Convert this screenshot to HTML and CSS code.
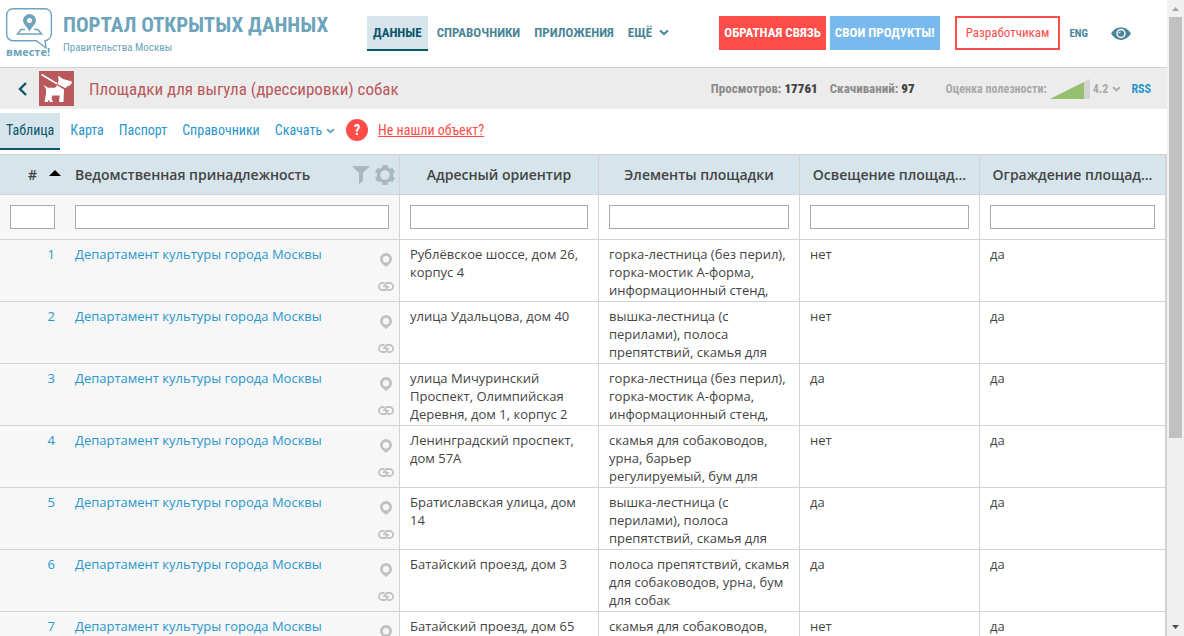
FILE: index.html
```html
<!DOCTYPE html>
<html lang="ru">
<head>
<meta charset="utf-8">
<title>Портал открытых данных</title>
<link rel="stylesheet" href="styles.css">
</head>
<body>
<svg class="defs" aria-hidden="true">
  <symbol id="chevron" viewBox="0 0 10 7"><path d="M1 1.500 5 5 9 1.500" fill="none" stroke="currentColor" stroke-width="2.200"/></symbol>
  <symbol id="pin" viewBox="0 0 12 14"><path fill="currentColor" fill-rule="evenodd" d="M6 0a6 6 0 0 1 6 6c0 2-.9 3.400-2.200 4.700L6 14l-3.800-3.300C.9 9.400 0 8 0 6a6 6 0 0 1 6-6zm0 3a3.200 3.200 0 1 0 0 6.400A3.200 3.200 0 0 0 6 3z"/></symbol>
  <symbol id="chain" viewBox="0 0 16 9"><g fill="none" stroke="currentColor" stroke-width="1.800"><path d="M6.500 1H4.400a3.500 3.500 0 0 0 0 7h2.200c1.500 0 2.200-.8 2.200-2s-.8-1.800-2-1.800H5"/><path d="M9.500 8h2.100a3.500 3.500 0 0 0 0-7H9.400C7.900 1 7.200 1.800 7.200 3s.8 1.800 2 1.800H11"/></g></symbol>
</svg>
<div class="page">
  <header class="header">
    <a class="brand" href="#">
      <svg class="logo" viewBox="0 0 48 42" aria-hidden="true">
        <path d="M7 .7h32c4 0 6.400 3 6.400 7v17c0 4-2.400 7.500-6.400 8l1 7.300-9.500-7.300H7c-4 0-6.300-3-6.300-7v-18c0-4 2.300-7 6.300-7z" fill="none" stroke="currentColor" stroke-width="1.400"/>
        <path fill="currentColor" fill-rule="evenodd" d="M23.500 6a6.500 6.500 0 0 1 6.500 6.500c0 4-4.500 6.500-6.500 11-2-4.500-6.500-7-6.500-11A6.500 6.500 0 0 1 23.500 6zm0 4a2.500 2.500 0 1 0 0 5 2.500 2.500 0 0 0 0-5z"/>
        <path d="M19 21.500h-4L11.500 26h24L32 21.500h-4" fill="none" stroke="currentColor" stroke-width="1.500"/>
      </svg>
      <span class="logo-word">вместе!</span>
    </a>
    <div class="titles">
      <div class="site-title">ПОРТАЛ ОТКРЫТЫХ ДАННЫХ</div>
      <div class="site-sub">Правительства Москвы</div>
    </div>
    <nav class="nav">
      <a class="nav-link active" href="#">ДАННЫЕ</a>
      <a class="nav-link" href="#">СПРАВОЧНИКИ</a>
      <a class="nav-link" href="#">ПРИЛОЖЕНИЯ</a>
      <button class="nav-link more" type="button">ЕЩЁ <svg class="chev"><use href="#chevron"/></svg></button>
    </nav>
    <div class="actions">
      <button class="btn red" type="button">ОБРАТНАЯ СВЯЗЬ</button>
      <button class="btn blue" type="button">СВОИ ПРОДУКТЫ!</button>
      <a class="btn outline" href="#">Разработчикам</a>
      <a class="lang" href="#">ENG</a>
      <button class="eye" type="button" aria-label="Версия для слабовидящих">
        <svg viewBox="0 0 20 13"><path fill="currentColor" fill-rule="evenodd" d="M0 6.500C5-2 15-2 20 6.500 15 15 5 15 0 6.500zM10 1.800a4.700 4.700 0 1 0 0 9.400 4.700 4.700 0 0 0 0-9.400z"/><path fill="currentColor" fill-rule="evenodd" d="M10 3.300a3.200 3.200 0 1 1 0 6.400 3.200 3.200 0 0 1 0-6.400zm-.3 1.100c-1.100 0-1.900.8-1.900 1.900h1c0-.6.300-.9.900-.9z"/></svg>
      </button>
    </div>
  </header>

  <section class="dataset">
    <a class="back" href="#" aria-label="Назад"><svg viewBox="0 0 10 14"><path d="M8 1 2 7l6 6" fill="none" stroke="currentColor" stroke-width="2.400"/></svg></a>
    <svg class="dog" viewBox="0 0 35 35" aria-hidden="true">
      <rect width="35" height="35" fill="#b9595c"/>
      <g fill="#fff"><path d="M19 4.500 24 8l9 2.500c0 2.500-2 4.500-5 5l-1.500 1.700L18.500 13l1.200-3.500z"/><path d="M4.500 14 9 16.800h7l2.300-2.600L25 18.500 24.500 31H20l.7-6.500h-7.200L12.500 27l1.500 4h-3.200L9.500 28.500 8.800 31H5.500l1.500-8v-5z"/></g>
      <path d="M2.500 3.500 18 12.700" stroke="#fff" stroke-width="1.600"/>
    </svg>
    <h1 class="dataset-title">Площадки для выгула (дрессировки) собак</h1>
    <div class="stats">
      <span>Просмотров: <b>17761</b></span>
      <span>Скачиваний: <b>97</b></span>
    </div>
    <div class="rating">
      <span>Оценка полезности:</span>
      <svg class="wedge" viewBox="0 0 40 20" aria-hidden="true"><path d="M0 20 40 0v20z" fill="#d3d3d3"/><path d="M0 20 34 3v17z" fill="#95c06f"/></svg>
      <button class="score" type="button">4.2 <svg class="chev small"><use href="#chevron"/></svg></button>
    </div>
    <a class="rss" href="#">RSS</a>
  </section>

  <nav class="tabs">
    <a class="tab active" href="#">Таблица</a>
    <a class="tab" href="#">Карта</a>
    <a class="tab" href="#">Паспорт</a>
    <a class="tab" href="#">Справочники</a>
    <button class="tab" type="button">Скачать <svg class="chev small"><use href="#chevron"/></svg></button>
    <span class="help">?</span>
    <a class="missing" href="#">Не нашли объект?</a>
  </nav>

  <table class="grid">
    <colgroup><col class="c-num"><col class="c-dept"><col class="c-addr"><col class="c-items"><col class="c-light"><col class="c-fence"></colgroup>
    <thead>
      <tr class="heads">
        <th class="num">#<svg class="sort" viewBox="0 0 12 6"><path d="M0 6 6 0l6 6z"/></svg></th>
        <th class="dept"><div class="dept-head"><span>Ведомственная принадлежность</span>
          <button type="button" aria-label="Фильтр"><svg width="18" height="18" viewBox="0 0 18 18"><path fill="currentColor" d="M0 0h18l-7 7v8l-4 3V7z"/></svg></button>
          <button type="button" aria-label="Настройки"><svg width="20" height="20" viewBox="0 0 20 20"><g fill="none" stroke="currentColor"><circle cx="10" cy="10" r="6.500" stroke-width="3.400"/><path stroke-width="5" d="M10 0v4M18.700 5l-3.500 2M18.700 15l-3.500-2M10 20v-4M1.300 15l3.500-2M1.300 5l3.500 2"/></g></svg></button></div></th>
        <th>Адресный ориентир</th>
        <th>Элементы площадки</th>
        <th>Освещение площад...</th>
        <th>Ограждение площад...</th>
      </tr>
      <tr class="filters">
        <td class="num"><input type="text" aria-label="Номер"></td>
        <td class="dept"><input type="text" aria-label="Ведомственная принадлежность"></td>
        <td><input type="text" aria-label="Адресный ориентир"></td>
        <td><input type="text" aria-label="Элементы площадки"></td>
        <td><input type="text" aria-label="Освещение площадки"></td>
        <td><input type="text" aria-label="Ограждение площадки"></td>
      </tr>
    </thead>
    <tbody>
      <tr><td class="num"><a href="#">1</a></td><td class="dept"><div class="dept-cell"><a href="#">Департамент культуры города Москвы</a><span class="marks"><svg class="pin"><use href="#pin"/></svg><svg class="chain"><use href="#chain"/></svg></span></div></td><td><div class="clip">Рублёвское шоссе, дом 26, корпус 4</div></td><td><div class="clip">горка-лестница (без перил), горка-мостик А-форма, информационный стенд,</div></td><td>нет</td><td>да</td></tr>
      <tr><td class="num"><a href="#">2</a></td><td class="dept"><div class="dept-cell"><a href="#">Департамент культуры города Москвы</a><span class="marks"><svg class="pin"><use href="#pin"/></svg><svg class="chain"><use href="#chain"/></svg></span></div></td><td><div class="clip">улица Удальцова, дом 40</div></td><td><div class="clip">вышка-лестница (с перилами), полоса препятствий, скамья для</div></td><td>нет</td><td>да</td></tr>
      <tr><td class="num"><a href="#">3</a></td><td class="dept"><div class="dept-cell"><a href="#">Департамент культуры города Москвы</a><span class="marks"><svg class="pin"><use href="#pin"/></svg><svg class="chain"><use href="#chain"/></svg></span></div></td><td><div class="clip">улица Мичуринский Проспект, Олимпийская Деревня, дом 1, корпус 2</div></td><td><div class="clip">горка-лестница (без перил), горка-мостик А-форма, информационный стенд,</div></td><td>да</td><td>да</td></tr>
      <tr><td class="num"><a href="#">4</a></td><td class="dept"><div class="dept-cell"><a href="#">Департамент культуры города Москвы</a><span class="marks"><svg class="pin"><use href="#pin"/></svg><svg class="chain"><use href="#chain"/></svg></span></div></td><td><div class="clip">Ленинградский проспект, дом 57А</div></td><td><div class="clip">скамья для собаководов, урна, барьер регулируемый, бум для</div></td><td>нет</td><td>да</td></tr>
      <tr><td class="num"><a href="#">5</a></td><td class="dept"><div class="dept-cell"><a href="#">Департамент культуры города Москвы</a><span class="marks"><svg class="pin"><use href="#pin"/></svg><svg class="chain"><use href="#chain"/></svg></span></div></td><td><div class="clip">Братиславская улица, дом 14</div></td><td><div class="clip">вышка-лестница (с перилами), полоса препятствий, скамья для</div></td><td>да</td><td>да</td></tr>
      <tr><td class="num"><a href="#">6</a></td><td class="dept"><div class="dept-cell"><a href="#">Департамент культуры города Москвы</a><span class="marks"><svg class="pin"><use href="#pin"/></svg><svg class="chain"><use href="#chain"/></svg></span></div></td><td><div class="clip">Батайский проезд, дом 3</div></td><td><div class="clip">полоса препятствий, скамья для собаководов, урна, бум для собак</div></td><td>да</td><td>да</td></tr>
      <tr><td class="num"><a href="#">7</a></td><td class="dept"><div class="dept-cell"><a href="#">Департамент культуры города Москвы</a><span class="marks"><svg class="pin"><use href="#pin"/></svg><svg class="chain"><use href="#chain"/></svg></span></div></td><td><div class="clip">Батайский проезд, дом 65</div></td><td><div class="clip">скамья для собаководов,</div></td><td>нет</td><td>да</td></tr>
    </tbody>
  </table>
</div>
<div class="scrollbar" aria-hidden="true">
  <svg class="arrow up" viewBox="0 0 7 4"><path d="M0 4 3.500 0 7 4z"/></svg>
  <div class="track"><div class="thumb"></div></div>
  <svg class="arrow" viewBox="0 0 7 4"><path d="M0 0 3.500 4 7 0z"/></svg>
</div>
</body>
</html>
```
FILE: styles.css
```css
* { box-sizing: border-box; }
body {
  margin: 0;
  height: 100vh;
  overflow: hidden;
  display: flex;
  background: #fff;
  color: #444;
  font: 13px/18px "Open Sans", sans-serif;
}
a { color: inherit; text-decoration: none; }
button { font: inherit; color: inherit; border: 0; padding: 0; background: none; white-space: nowrap; }
svg { display: block; flex: none; }
.defs { position: absolute; width: 0; height: 0; }
.page { flex: 1; min-width: 0; overflow: hidden; }

.header, .dataset, .tabs { font-family: "Roboto Condensed", "Liberation Sans Narrow", sans-serif; white-space: nowrap; }
.header { display: flex; height: 68px; border-bottom: 1px solid #d0d3d4; color: #4b8698; }
.brand { flex: none; width: 63px; padding: 8px 0 0 6px; color: #6da4bb; }
.logo { width: 48px; height: 42px; }
.logo-word { display: block; margin-top: -4px; font: bold 11px/12px "Open Sans", sans-serif; }
.titles { flex: none; width: 304px; padding-top: 9px; color: #6da4bb; }
.site-title { font-weight: bold; font-size: 21px; line-height: 32px; }
.site-sub { font-size: 11px; line-height: 13px; }
.nav { display: flex; align-items: flex-start; gap: 14px; padding-top: 16px; font-weight: bold; font-size: 13px; line-height: 33px; }
.nav-link { border-bottom: 2px solid transparent; }
.nav-link.active { margin-right: -5px; padding: 0 6px; background: #d6e4eb; border-bottom-color: #0a566b; color: #0a566b; }
.more { display: flex; align-items: center; gap: 7px; }
.chev { width: 10px; height: 7px; }
.chev.small { width: 9px; height: 6px; }
.actions { display: flex; align-items: flex-start; margin-left: auto; padding: 16px 36px 0 0; line-height: 34px; }
.btn { height: 34px; padding: 0 5px; margin-right: 4px; font-weight: bold; font-size: 13px; color: #fff; }
.red { background: #ff4d4a; }
.blue { background: #78b9ee; }
.outline { margin: 0 9px 0 11px; padding: 0 9px; border: 2px solid #ff4d4a; font-weight: normal; line-height: 30px; color: #ff4d4a; }
.lang { font-weight: bold; font-size: 11px; line-height: 36px; }
.eye { height: 34px; margin-left: 23px; }
.eye svg { width: 20px; height: 13px; }

.dataset { display: flex; align-items: center; height: 41px; background: #ececec; padding: 0 16px 0 18px; color: #a9a9a9; font-weight: bold; font-size: 12px; }
.back { width: 21px; color: #0a566b; }
.back svg { width: 10px; height: 14px; }
.dog { width: 35px; height: 35px; }
.dataset-title { margin: 0 auto 0 15px; font-weight: normal; font-size: 17px; color: #b9595c; }
.stats { display: flex; gap: 12px; color: #8a8a8a; margin-right: 31px; font-size: 13px; }
.stats b { color: #444; }
.rating { display: flex; align-items: center; gap: 3px; margin-right: 10px; }
.wedge { width: 40px; height: 20px; }
.score { display: flex; align-items: center; gap: 4px; }
.rss { color: #2996cc; }

.tabs { display: flex; align-items: flex-start; gap: 15px; height: 45px; padding-top: 4px; font-size: 14px; line-height: 35px; color: #2996cc; }
.tab { display: flex; align-items: center; gap: 4px; border-bottom: 2px solid transparent; }
.tab.active { margin-right: -5px; padding: 0 6px; background: #d6e4eb; border-bottom-color: #0a566b; color: #0a566b; }
.tab .chev { color: #6da4bb; }
.help { width: 22px; height: 22px; margin: 6px -5px 0 -4px; border-radius: 50%; background: #ff4d4a; color: #fff; text-align: center; font-weight: bold; line-height: 22px; }
.missing { color: #ff4d4a; text-decoration: underline; }

.grid { width: 100%; table-layout: fixed; border-spacing: 0; border-top: 1px solid #d3d3d3; border-right: 1px solid #d3d3d3; }
.c-num { width: 65px; }
.c-dept { width: 335px; }
.c-addr { width: 199px; }
.c-items { width: 201px; }
.c-light { width: 180px; }
.grid th, .grid td { padding: 0 10px; border-right: 1px solid #d3d3d3; border-bottom: 1px solid #d3d3d3; vertical-align: top; text-align: left; }
.grid .num { border-right: 0; text-align: right; }
.grid th { height: 40px; vertical-align: middle; background: #d6e4eb; font-weight: 600; font-size: 14px; text-align: center; white-space: nowrap; }
.grid th.num { padding-right: 4px; }
.sort { display: inline-block; width: 12px; height: 6px; margin-left: 12px; vertical-align: 4px; }
.dept-head { display: flex; align-items: center; gap: 5px; margin-right: -6px; color: #444; }
.dept-head span { margin-right: auto; }
.dept-head button { color: #aab7bd; }
.grid .filters td { height: 45px; padding-top: 10px; }
.filters input { display: block; width: 100%; height: 24px; border: 1px solid #a9a9a9; background: #fff; }
.grid tbody td { height: 62px; padding-top: 5px; }
.grid td.num, .grid td.dept { background: #f7f7f7; }
.clip { max-height: 54px; margin-right: -1px; overflow: hidden; }
tbody a { color: #2996cc; }
.dept-cell { display: flex; justify-content: space-between; margin-right: -5px; }
.marks { display: flex; flex-direction: column; align-items: center; gap: 15px; padding-top: 8px; color: #c1c1c1; }
.pin { width: 12px; height: 14px; }
.chain { width: 16px; height: 9px; }

.scrollbar { flex: none; width: 17px; display: flex; flex-direction: column; align-items: center; gap: 6px; padding: 7px 0; background: #f0f0f0; }
.track { flex: 1; width: 13px; }
.thumb { height: 70%; background: #c1c1c1; }
.arrow { width: 7px; height: 4px; fill: #505050; }
.arrow.up { fill: #a3a3a3; }
```
